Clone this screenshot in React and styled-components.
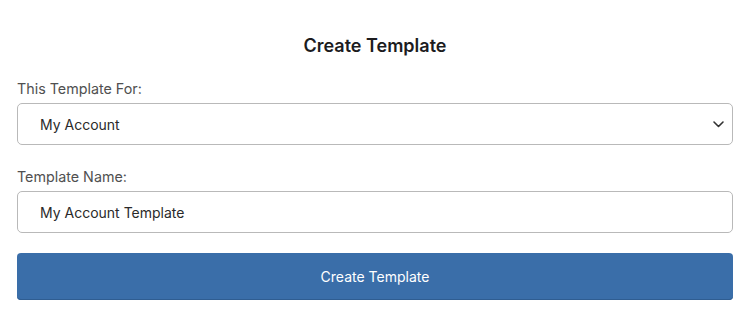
import styled, { createGlobalStyle } from 'styled-components';

const GlobalStyle = createGlobalStyle`
  body {
    margin: 0;
    background: #ffffff;
    font-family: 'Inter', 'Noto Sans', sans-serif;
  }
`;

const Page = styled.div`
  width: 750px;
  height: 325px;
  box-sizing: border-box;
  padding: 33px 17px 0 17px;
  display: flex;
  flex-direction: column;
`;

const Title = styled.h2`
  margin: 0 0 18px 0;
  text-align: center;
  font-size: 18px;
  font-weight: 600;
  color: #1c1c1e;
  line-height: 26px;
`;

const Field = styled.div`
  display: flex;
  flex-direction: column;
  margin-bottom: ${({ gap }) => gap}px;
`;

const Label = styled.label`
  font-size: 14.3px;
  color: #505050;
  line-height: 20px;
  padding-top: 2px;
  margin-bottom: 4px;
`;

const Box = styled.div`
  height: 42px;
  box-sizing: border-box;
  border: 1px solid #b9b9b9;
  border-radius: 5px;
  display: flex;
  align-items: center;
  justify-content: space-between;
  padding: 0 6px 0 22px;
  font-size: 14px;
  color: #2a2a2a;
`;

const Button = styled.button`
  height: 47px;
  border: none;
  border-radius: 4px;
  background: #3a6ea9;
  color: #ffffff;
  font-family: inherit;
  font-size: 14px;
  box-shadow: inset 0 -1px 0 #2f5d91;
`;

function Chevron() {
  return (
    <svg width="14" height="14" viewBox="0 0 14 14" fill="none">
      <path d="M2 5 L6.5 9.5 L11 5" stroke="#333" strokeWidth="1.6" strokeLinecap="round" strokeLinejoin="round" />
    </svg>
  );
}

export default function App() {
  return (
    <>
      <GlobalStyle />
      <Page>
        <Title>Create Template</Title>
        <Field gap={20}>
          <Label>This Template For:</Label>
          <Box>
            <span>My Account</span>
            <Chevron />
          </Box>
        </Field>
        <Field gap={20}>
          <Label>Template Name:</Label>
          <Box>
            <span>My Account Template</span>
          </Box>
        </Field>
        <Button>Create Template</Button>
      </Page>
    </>
  );
}
